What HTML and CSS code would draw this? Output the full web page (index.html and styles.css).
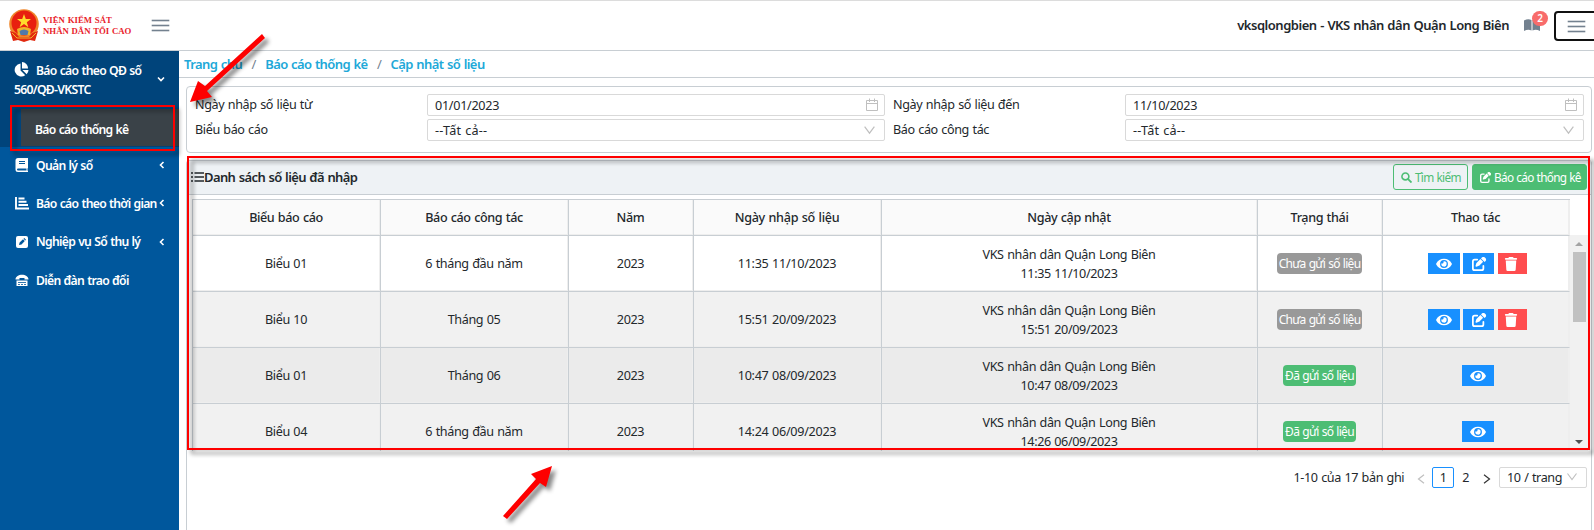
FILE: index.html
```html
<!DOCTYPE html>
<html lang="vi"><head><meta charset="utf-8"><title>Báo cáo thống kê</title><link rel="stylesheet" href="styles.css"></head>
<body>
<svg width="0" height="0" class="defs">
<symbol id="eye" viewBox="0 0 576 512"><path fill="currentColor" d="M572.5 241.4C518.3 135.600 410.900 64 288 64S57.700 135.600 3.500 241.400a32 32 0 0 0 0 29.200C57.700 376.400 165.100 448 288 448s230.300-71.600 284.500-177.400a32 32 0 0 0 0-29.200zM288 400a144 144 0 1 1 144-144 144 144 0 0 1-144 144zm0-240a95 95 0 0 0-25.300 3.800 48 48 0 0 1-66.900 66.900A96 96 0 1 0 288 160z"/></symbol>
<symbol id="edit" viewBox="0 0 512 512"><path fill="currentColor" d="M471 22a78 78 0 0 0-110 0l-31 30 130 130 30-31a78 78 0 0 0 0-110zM308 75 172 210c-6 6-11 14-14 22l-29 87c-7 20 12 40 33 33l87-29c8-3 16-8 22-14l136-135zM96 64a96 96 0 0 0-96 96v256a96 96 0 0 0 96 96h256a96 96 0 0 0 96-96v-96c0-42-64-42-64 0v96c0 18-14 32-32 32H96c-18 0-32-14-32-32V160c0-18 14-32 32-32h96c42 0 42-64 0-64z"/></symbol>
<symbol id="trash" viewBox="0 0 448 512"><path fill="currentColor" d="M135 18 128 32H32a32 32 0 0 0 0 64h384a32 32 0 0 0 0-64h-96l-7-14A32 32 0 0 0 284 0H164a32 32 0 0 0-29 18zM416 128H32l21 339a48 48 0 0 0 48 45h246a48 48 0 0 0 48-45z"/></symbol>
<symbol id="cal" viewBox="0 0 14 14"><path fill="none" stroke="currentColor" d="M1.500 2.500h11v10h-11zM1.500 5.500h11M4.500 .5v3.500M9.500 .5v3.500"/></symbol>
<symbol id="down" viewBox="0 0 12 12"><path fill="none" stroke="currentColor" stroke-width="1.100" d="M1.500 2.500 6 8.500l4.500-6"/></symbol>
<symbol id="chev" viewBox="0 0 6 8"><path fill="none" stroke="currentColor" stroke-width="1.600" d="M4.500 1 1.500 4l3 3"/></symbol>
<symbol id="angle" viewBox="0 0 8 10"><path fill="none" stroke="currentColor" stroke-width="1.200" d="M7 .8 1.500 5 7 9.200"/></symbol>
</svg>
<header class="top">
<svg class="emblem" viewBox="0 0 32 34"><circle cx="16" cy="15" r="14.800" fill="#f0862a"/><circle cx="16" cy="14" r="12.500" fill="#e8200f"/><path fill="#ffdb2c" d="m16 5 1.800 5h5.200l-4.200 3.200 1.600 5-4.400-3.100-4.400 3.100 1.600-5L9 10h5.200z"/><path fill="#e2290f" d="M2 22l6 2 3 4h10l3-4 6-2-3 10-5-1-6 2-6-2-5 1z"/><path fill="#f0b429" d="M9 20q7-4 14 0l-1 6H10z"/><path fill="#5279a8" d="M11.500 22q4.500-3 9 0l-1 4h-7z"/><path stroke="#f0b429" fill="none" d="M4 24l5 5h14l5-5"/></svg>
<div class="brand">VIỆN KIỂM SÁT<br>NHÂN DÂN TỐI CAO</div>
<span class="burger"><i></i><i></i><i></i></span>
<b class="user">vksqlongbien - VKS nhân dân Quận Long Biên</b>
<span class="book"><svg viewBox="0 0 16 13"><path fill="#73818f" d="M0 1.500Q4-.5 7.500 1v10.500Q4 10 0 12zM8.500 1Q12-.5 16 1.500V12q-4-2-7.500-.5z"/></svg><em>2</em></span>
<span class="toggle"><span class="burger"><i></i><i></i><i></i></span></span>
</header>
<div class="shell">
<nav class="side">
<div class="open"><div class="group"><span><svg viewBox="0 0 16 16"><path fill="currentColor" d="M7 1.500V9l5 5A7 7 0 1 1 7 1.500zM8.500 0A7 7 0 0 1 15 7H8.500zM9 8.500h6.500a7 7 0 0 1-2 4.500z"/></svg>Báo cáo theo QĐ số<br>560/QĐ-VKSTC</span><svg class="ch turned"><use href="#chev"/></svg></div>
<div class="current">Báo cáo thống kê</div></div>
<div class="item"><svg viewBox="0 0 14 14"><path fill="currentColor" fill-rule="evenodd" d="M3 0h10v10l-.5.500v2l.5.500v1H3a2.500 2.500 0 0 1-2.500-2.500v-9A2.500 2.500 0 0 1 3 0zm1 3v1h6V3zm0 2v1h6V5zM3 10.500a1 1 0 0 0 0 2h8.500v-2z"/></svg>Quản lý sổ<svg class="ch"><use href="#chev"/></svg></div>
<div class="item"><svg viewBox="0 0 14 14"><path stroke="currentColor" stroke-width="1.900" fill="none" d="M1 1v11.500h13M3.500 2.500h6M3.500 5.800h8M3.500 9h9.500"/></svg>Báo cáo theo thời gian<svg class="ch"><use href="#chev"/></svg></div>
<div class="item"><svg viewBox="0 0 14 14"><rect x="1" y="1" width="12" height="12" rx="2" fill="currentColor"/><path fill="#00579c" d="m4 10 .6-2.500L8 4.200 9.800 6 6.500 9.400zm4.500-6.300.8-.7L11 4.700l-.7.8z"/></svg>Nghiệp vụ Sổ thụ lý<svg class="ch"><use href="#chev"/></svg></div>
<div class="item"><svg viewBox="0 0 14 14"><path fill="currentColor" d="M.5 6.500C.5 0 13.500 0 13.500 6.500H9.500V5h-5v1.500zM1.500 7.500h11v5.500h-11z"/><path stroke="#00579c" d="M3 9.500h8M3 11.500h2M6 11.500h2M9 11.500h2" stroke-width=".8"/></svg>Diễn đàn trao đổi</div>
</nav>
<main>
<div class="crumbs"><b>Trang chủ</b><i>/</i><b>Báo cáo thống kê</b><i>/</i><b>Cập nhật số liệu</b></div>
<section class="filter">
<label>Ngày nhập số liệu từ</label><div class="field">01/01/2023<svg><use href="#cal"/></svg></div><label>Ngày nhập số liệu đến</label><div class="field">11/10/2023<svg><use href="#cal"/></svg></div>
<label>Biểu báo cáo</label><div class="field pick">--Tất cả--<svg><use href="#down"/></svg></div><label>Báo cáo công tác</label><div class="field pick">--Tất cả--<svg><use href="#down"/></svg></div>
</section>
<section class="list">
<div class="listhead"><svg class="bars" viewBox="0 0 13 12"><path stroke="currentColor" stroke-width="1.500" d="M0 2h2M3.500 2H13M0 6h2M3.500 6H13M0 10h2M3.500 10H13"/></svg><b>Danh sách số liệu đã nhập</b>
<span class="btn ghost"><svg viewBox="0 0 12 12"><circle cx="4.800" cy="4.800" r="3.800" fill="none" stroke="currentColor" stroke-width="1.700"/><path stroke="currentColor" stroke-width="2" d="m7.500 7.500 4 4"/></svg>Tìm kiếm</span><span class="btn solid"><svg><use href="#edit"/></svg>Báo cáo thống kê</span></div>
<div class="tablewrap"><div class="grid">
<div class="row head"><div>Biểu báo cáo</div><div>Báo cáo công tác</div><div>Năm</div><div>Ngày nhập số liệu</div><div>Ngày cập nhật</div><div>Trạng thái</div><div>Thao tác</div></div>
<div class="row"><div>Biểu 01</div><div>6 tháng đầu năm</div><div>2023</div><div>11:35 11/10/2023</div><div>VKS nhân dân Quận Long Biên<br>11:35 11/10/2023</div><div><span class="tag">Chưa gửi số liệu</span></div><div class="acts"><span class="a1"><svg><use href="#eye"/></svg></span><span class="a2"><svg><use href="#edit"/></svg></span><span class="a3"><svg><use href="#trash"/></svg></span></div></div>
<div class="row r2"><div>Biểu 10</div><div>Tháng 05</div><div>2023</div><div>15:51 20/09/2023</div><div>VKS nhân dân Quận Long Biên<br>15:51 20/09/2023</div><div><span class="tag">Chưa gửi số liệu</span></div><div class="acts"><span class="a1"><svg><use href="#eye"/></svg></span><span class="a2"><svg><use href="#edit"/></svg></span><span class="a3"><svg><use href="#trash"/></svg></span></div></div>
<div class="row r3"><div>Biểu 01</div><div>Tháng 06</div><div>2023</div><div>10:47 08/09/2023</div><div>VKS nhân dân Quận Long Biên<br>10:47 08/09/2023</div><div><span class="tag sent">Đã gửi số liệu</span></div><div class="acts"><span class="a1"><svg><use href="#eye"/></svg></span></div></div>
<div class="row r2"><div>Biểu 04</div><div>6 tháng đầu năm</div><div>2023</div><div>14:24 06/09/2023</div><div>VKS nhân dân Quận Long Biên<br>14:26 06/09/2023</div><div><span class="tag sent">Đã gửi số liệu</span></div><div class="acts"><span class="a1"><svg><use href="#eye"/></svg></span></div></div>
</div><div class="scroll"><i class="up"></i><i class="thumb"></i><i class="dn"></i></div></div>
<div class="pager"><span>1-10 của 17 bản ghi</span><svg class="prev"><use href="#angle"/></svg><span class="page">1</span><span class="two">2</span><svg class="next"><use href="#angle"/></svg><span class="size">10 / trang<svg><use href="#down"/></svg></span></div>
</section>
</main>
</div>
<div class="mark m1"></div><div class="mark m2"></div>
<svg class="arrows" viewBox="0 0 1594 530"><g fill="#fe0000"><path d="M262 34 205 86 198 81 190 102 212 97 207 91 265 38z"/><path d="M503 516 536 479 531 474 552 466 546 487 540 483 507 519z"/></g></svg>
</body></html>
```
FILE: styles.css
```css
*{box-sizing:border-box}
svg{flex:none}
body{margin:0;width:1594px;height:530px;overflow:hidden;position:relative;background:#fff;color:#23282c;font:12.600px/19px "Noto Sans",sans-serif;letter-spacing:-.38px;word-spacing:.6px}
i,em{font-style:normal}
b{font-weight:600}
.defs{position:absolute}
.top{height:51px;border-top:1px solid #dcdcdc;border-bottom:1px solid #c8ced3;display:flex;align-items:center;padding-left:8px}
.emblem{width:32px;height:34px}
.brand{margin-left:3px;width:101px;font:bold 8.750px/11px "Liberation Serif",serif;color:#e9222b;letter-spacing:0;white-space:nowrap}
.burger{display:flex;flex-direction:column;gap:4px;width:17px}
.burger i{height:1px;background:#73818f;box-shadow:0 0 0 .3px #73818f}
.top>.burger{margin-left:8px}
.user{margin-left:auto;white-space:nowrap;font-size:13px;letter-spacing:-.470px}
.book{margin-left:15px;width:16px;height:13px;display:flex;position:relative}
.book svg{width:16px;height:13px}
.book em{position:absolute;left:8px;top:-8px;width:16px;height:15px;border-radius:8px;background:#f86c6b;color:#fff;font-size:10px;line-height:15px;text-align:center;font-weight:600}
.toggle{margin-left:14px;width:44px;height:30px;border:2px solid #111;border-radius:4px;margin-right:-4px;padding:8px 0 0 12px}
.shell{display:flex;height:479px}
.side{width:179px;background:#00579c;color:#fff;font-weight:600;font-size:12.200px;letter-spacing:-.7px;flex:none}
.open{height:96px;background:#00447b}
.group{display:flex;height:58px;padding:10px 15px 0 14px;white-space:nowrap;align-items:flex-start}
.group span svg{width:15px;height:15px;margin-right:7px;vertical-align:-2px}
.ch{width:6px;height:8px;margin-left:auto;flex:none}
.turned{transform:rotate(-90deg);margin-top:14px}
.current{margin-left:21px;height:37px;background:#3a4248;padding:11px 14px 0;line-height:20px}
.item{height:38.300px;display:flex;align-items:center;padding:0 14px 2px 15px;white-space:nowrap}
.item>svg:first-child{width:14px;height:14px;margin-right:7px}
main{width:1415px;display:flex;flex-direction:column}
.crumbs{height:27px;border-bottom:1px solid #c8ced3;padding:4px 5px;display:flex;color:#20a8d8;font-size:13px;letter-spacing:-.57px}
.crumbs i{width:23px;text-align:center;color:#73818f}
.filter{margin:8px 2px 0 7px;height:67px;border:1px solid #c8ced3;border-radius:4px;padding:7px 7px 0 8px;display:grid;grid-template-columns:232px 458px 240px 459px;grid-auto-rows:25px}
.filter label{padding-top:1px}
.filter label:nth-of-type(even){padding-left:8px}
.field{height:22px;border:1px solid #d9d9d9;border-radius:2px;display:flex;align-items:center;justify-content:space-between;padding:0 5px 0 7px;letter-spacing:-.29px}
.field svg{width:14px;height:14px;color:#bfbfbf}
.pick{padding-right:8px;letter-spacing:.2px}
.pick svg{width:13px;height:13px}
.list{margin:7px 2px 0 7px;border:1px solid #c8ced3;border-bottom:0;border-radius:4px 4px 0 0;flex:1}
.listhead{height:34px;background:#eef2f5;border-bottom:1px solid #c8ced3;display:flex;align-items:center;padding:1px 4px 2px 4px}
.bars{width:13px;height:12px}
.listhead b{margin-right:auto;font-size:13px;letter-spacing:-.6px}
.btn{height:26px;border:1px solid #4dbd74;border-radius:3px;padding:0 7px;display:flex;align-items:center;gap:3px;color:#4dbd74;white-space:nowrap;font-size:11.800px;letter-spacing:-.7px}
.btn svg{width:11px;height:11px}
.ghost{width:75px;margin-right:4px}
.solid{width:115px;background:#4dbd74;color:#fff}
.tablewrap{display:flex;height:252px;margin:4px 3px 0 5px;overflow:hidden}
.grid{width:1378px;flex:none;border-left:1px solid #c8ced3;border-top:1px solid #c8ced3}
.row{display:grid;grid-template-columns:188px 188px 125px 188px 376px 125px 187px;height:56px;text-align:center}
.row>div{border-right:1px solid #c8ced3;border-bottom:1px solid #c8ced3;display:flex;align-items:center;justify-content:center;box-shadow:inset -1px -1px #eee;padding-right:1px}
.row>div:last-child{border-right-color:#eee}
.row>div:nth-child(4){letter-spacing:-.29px}
.head{height:36px;background:#fafafa;font-weight:500}
.r2{background:#f1f1f1}.r3{background:#ebebeb}
.tag{height:21px;width:85px;border-radius:4px;background:#999;color:#fff;font-size:12px;line-height:21px;letter-spacing:-.7px;white-space:nowrap}
.sent{background:#4dbd74;width:73px}
.row>.acts{padding-left:4px}
.acts span{height:21px;background:#1890ff;color:#fff;display:flex;align-items:center;justify-content:center}
.a1{width:32px}.a2{width:31px;margin:0 4px 0 3px}.acts .a3{width:29px;background:#ff4d4f;padding-right:4px}
.acts svg{width:16px;height:14px}
.scroll{width:18px;margin-top:36px;background:#f1f1f1;display:flex;flex-direction:column;align-items:center}
.up,.dn{border:4px solid transparent;border-top:0;border-bottom-color:#a3a3a3;margin:7px 0 6px}
.thumb{width:13px;height:70px;background:#c1c1c1}
.dn{border-top:4px solid #505050;border-bottom:0;margin-top:auto;margin-bottom:7px}
.pager{display:flex;align-items:center;justify-content:flex-end;height:22px;margin:15px 4px 0 0}
.prev,.next{width:8px;height:10px;margin:3px 7px 0 13px;color:#bfbfbf}
.next{transform:scaleX(-1);margin:3px 8px 0 14px;color:#333}
.page{width:22px;height:21px;border:1px solid #1890ff;border-radius:2px;text-align:center}
.two{margin-left:8px}
.size{width:88px;height:21px;border:1px solid #d9d9d9;border-radius:2px;padding:0 8px 0 7px;display:flex;align-items:center;justify-content:space-between;white-space:nowrap}
.size svg{width:12px;height:12px;color:#bfbfbf}
.mark{position:absolute;border:2px solid #fe0000;filter:drop-shadow(4px 4px 2px #0007)}
.m1{left:10px;top:105px;width:165px;height:46px}
.m2{left:187px;top:156px;width:1403px;height:294px}
.arrows{position:absolute;left:0;top:0;width:1594px;height:530px;filter:drop-shadow(4px 4px 2px #0007)}
```
